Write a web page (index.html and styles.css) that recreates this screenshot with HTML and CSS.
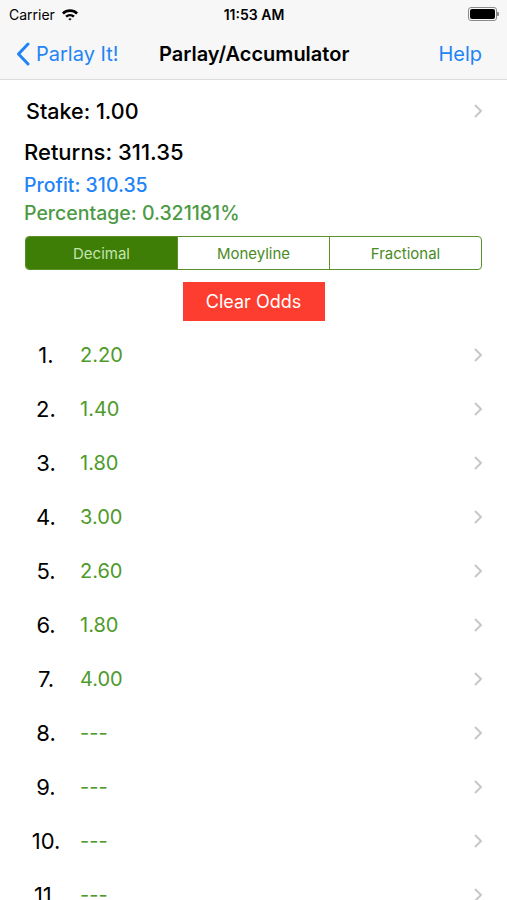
FILE: index.html
```html
<!DOCTYPE html>
<html lang="en">

<head>
    <meta charset="UTF-8">
    <meta name="viewport" content="width=device-width, initial-scale=1.0">
    <title>Parlay/Accumulator</title>
    <link rel="stylesheet" href="styles.css">
</head>

<body>
    <div class="statusbar">
        <div class="carrier">
            Carrier
            <svg class="wifi" width="18" height="13" viewBox="0 0 18 13">
                <path d="M1 4.6 A11.5 11.5 0 0 1 17 4.6 L15.2 6.4 A9 9 0 0 0 2.8 6.4 Z" fill="#000" />
                <path d="M4.2 7.8 A7 7 0 0 1 13.8 7.8 L12 9.6 A4.5 4.5 0 0 0 6 9.6 Z" fill="#000" />
                <path d="M7.4 11 A2.4 2.4 0 0 1 10.6 11 L9 12.6 Z" fill="#000" />
            </svg>
        </div>
        <div class="clock">11:53 AM</div>
        <div class="battery">
            <span class="battery-body"><span class="battery-fill"></span></span>
            <span class="battery-nub"></span>
        </div>
    </div>

    <div class="navbar">
        <div class="nav-back">
            <svg width="14" height="24" viewBox="0 0 14 24">
                <path d="M12 2 L2.5 12 L12 22" fill="none" stroke="#1f84f5" stroke-width="3" stroke-linecap="round" stroke-linejoin="round" />
            </svg>
            <span>Parlay It!</span>
        </div>
        <div class="nav-title">Parlay/Accumulator</div>
        <div class="nav-help">Help</div>
    </div>

    <div class="summary">
        <div class="stake-row">
            <span class="stake">Stake: 1.00</span>
            <svg class="chevron" width="10" height="16" viewBox="0 0 10 16">
                <path d="M2 2 L8 8 L2 14" fill="none" stroke="#c7c7cc" stroke-width="2" />
            </svg>
        </div>
        <div class="returns">Returns: 311.35</div>
        <div class="profit">Profit: 310.35</div>
        <div class="percentage">Percentage: 0.321181%</div>
    </div>

    <div class="segments">
        <div class="segment active">Decimal</div>
        <div class="segment">Moneyline</div>
        <div class="segment">Fractional</div>
    </div>

    <div class="clear-wrap">
        <button class="clear-odds">Clear Odds</button>
    </div>

    <div class="odds-list" id="odds"></div>

    <script>
        const odds = ['2.20', '1.40', '1.80', '3.00', '2.60', '1.80', '4.00', '---', '---', '---', '---'];
        const list = document.getElementById('odds');

        // build one row per leg
        odds.forEach((value, i) => {
            const row = document.createElement('div');
            row.className = 'odds-row';
            row.innerHTML =
                '<span class="leg">' + (i + 1) + '.</span>' +
                '<span class="odd">' + value + '</span>' +
                '<svg class="chevron" width="10" height="16" viewBox="0 0 10 16">' +
                '<path d="M2 2 L8 8 L2 14" fill="none" stroke="#c7c7cc" stroke-width="2" /></svg>';
            list.appendChild(row);
        });
    </script>
</body>

</html>
```

FILE: styles.css
```css
body {
    margin: 0;
    font-family: Inter, "Liberation Sans", sans-serif;
    background-color: #fff;
    color: #000;
    overflow: hidden;
}

.statusbar {
    height: 28px;
    background-color: #f7f7f7;
    display: flex;
    align-items: center;
    justify-content: space-between;
    padding: 0 8px 0 9px;
    font-size: 14px;
}

.carrier {
    display: flex;
    align-items: center;
    gap: 6px;
    width: 120px;
}

.clock {
    font-weight: 600;
}

.battery {
    width: 120px;
    display: flex;
    justify-content: flex-end;
    align-items: center;
}

.battery-body {
    width: 25px;
    height: 10px;
    border: 1px solid #8a8a8a;
    border-radius: 3px;
    padding: 1px;
    display: flex;
}

.battery-fill {
    flex: 1;
    background-color: #000;
    border-radius: 2px;
}

.battery-nub {
    width: 2px;
    height: 4px;
    background-color: #8a8a8a;
    border-radius: 0 1px 1px 0;
}

.navbar {
    height: 51px;
    background-color: #f7f7f7;
    border-bottom: 1px solid #dcdcdc;
    display: flex;
    align-items: center;
    font-size: 20px;
}

.nav-back {
    display: flex;
    align-items: center;
    gap: 6px;
    color: #1f84f5;
    padding-left: 16px;
    width: 130px;
}

.nav-title {
    font-weight: 600;
    padding-left: 13px;
    flex: 1;
}

.nav-help {
    color: #1f84f5;
    padding-right: 25px;
}

.summary {
    padding: 9px 24px 0 24px;
}

.stake-row {
    display: flex;
    justify-content: space-between;
    align-items: center;
    height: 44px;
}

.stake {
    font-size: 21.5px;
    font-weight: 500;
    padding-left: 2px;
}

.returns {
    font-size: 22px;
    font-weight: 500;
    line-height: 38px;
}

.profit {
    color: #1f84f5;
    font-size: 19.5px;
    font-weight: 500;
    line-height: 28px;
}

.percentage {
    color: #4c9a45;
    font-size: 19.5px;
    font-weight: 500;
    line-height: 29px;
}

.segments {
    display: flex;
    margin: 8px 25px 0 25px;
    height: 34px;
    border: 1px solid #5a8f2a;
    border-radius: 4px;
    overflow: hidden;
    box-sizing: border-box;
}

.segment {
    flex: 1;
    display: flex;
    align-items: center;
    justify-content: center;
    font-size: 15px;
    color: #4b8a1f;
    border-left: 1px solid #5a8f2a;
}

.segment:first-child {
    border-left: none;
}

.segment.active {
    background-color: #3e7d06;
    color: #c4e6ae;
}

.clear-wrap {
    display: flex;
    justify-content: center;
    margin-top: 12px;
}

.clear-odds {
    width: 142px;
    height: 39px;
    border: none;
    background-color: #fc3d2f;
    color: #fff;
    font-family: Inter, "Liberation Sans", sans-serif;
    font-size: 18px;
}

.odds-list {
    margin-top: 7px;
}

.odds-row {
    height: 54px;
    display: flex;
    align-items: center;
    padding: 0 24px 0 26px;
}

.leg {
    width: 40px;
    text-align: center;
    font-size: 22px;
}

.odd {
    margin-left: 14px;
    flex: 1;
    color: #4e9a2a;
    font-size: 20px;
}

.chevron {
    display: block;
}
```
